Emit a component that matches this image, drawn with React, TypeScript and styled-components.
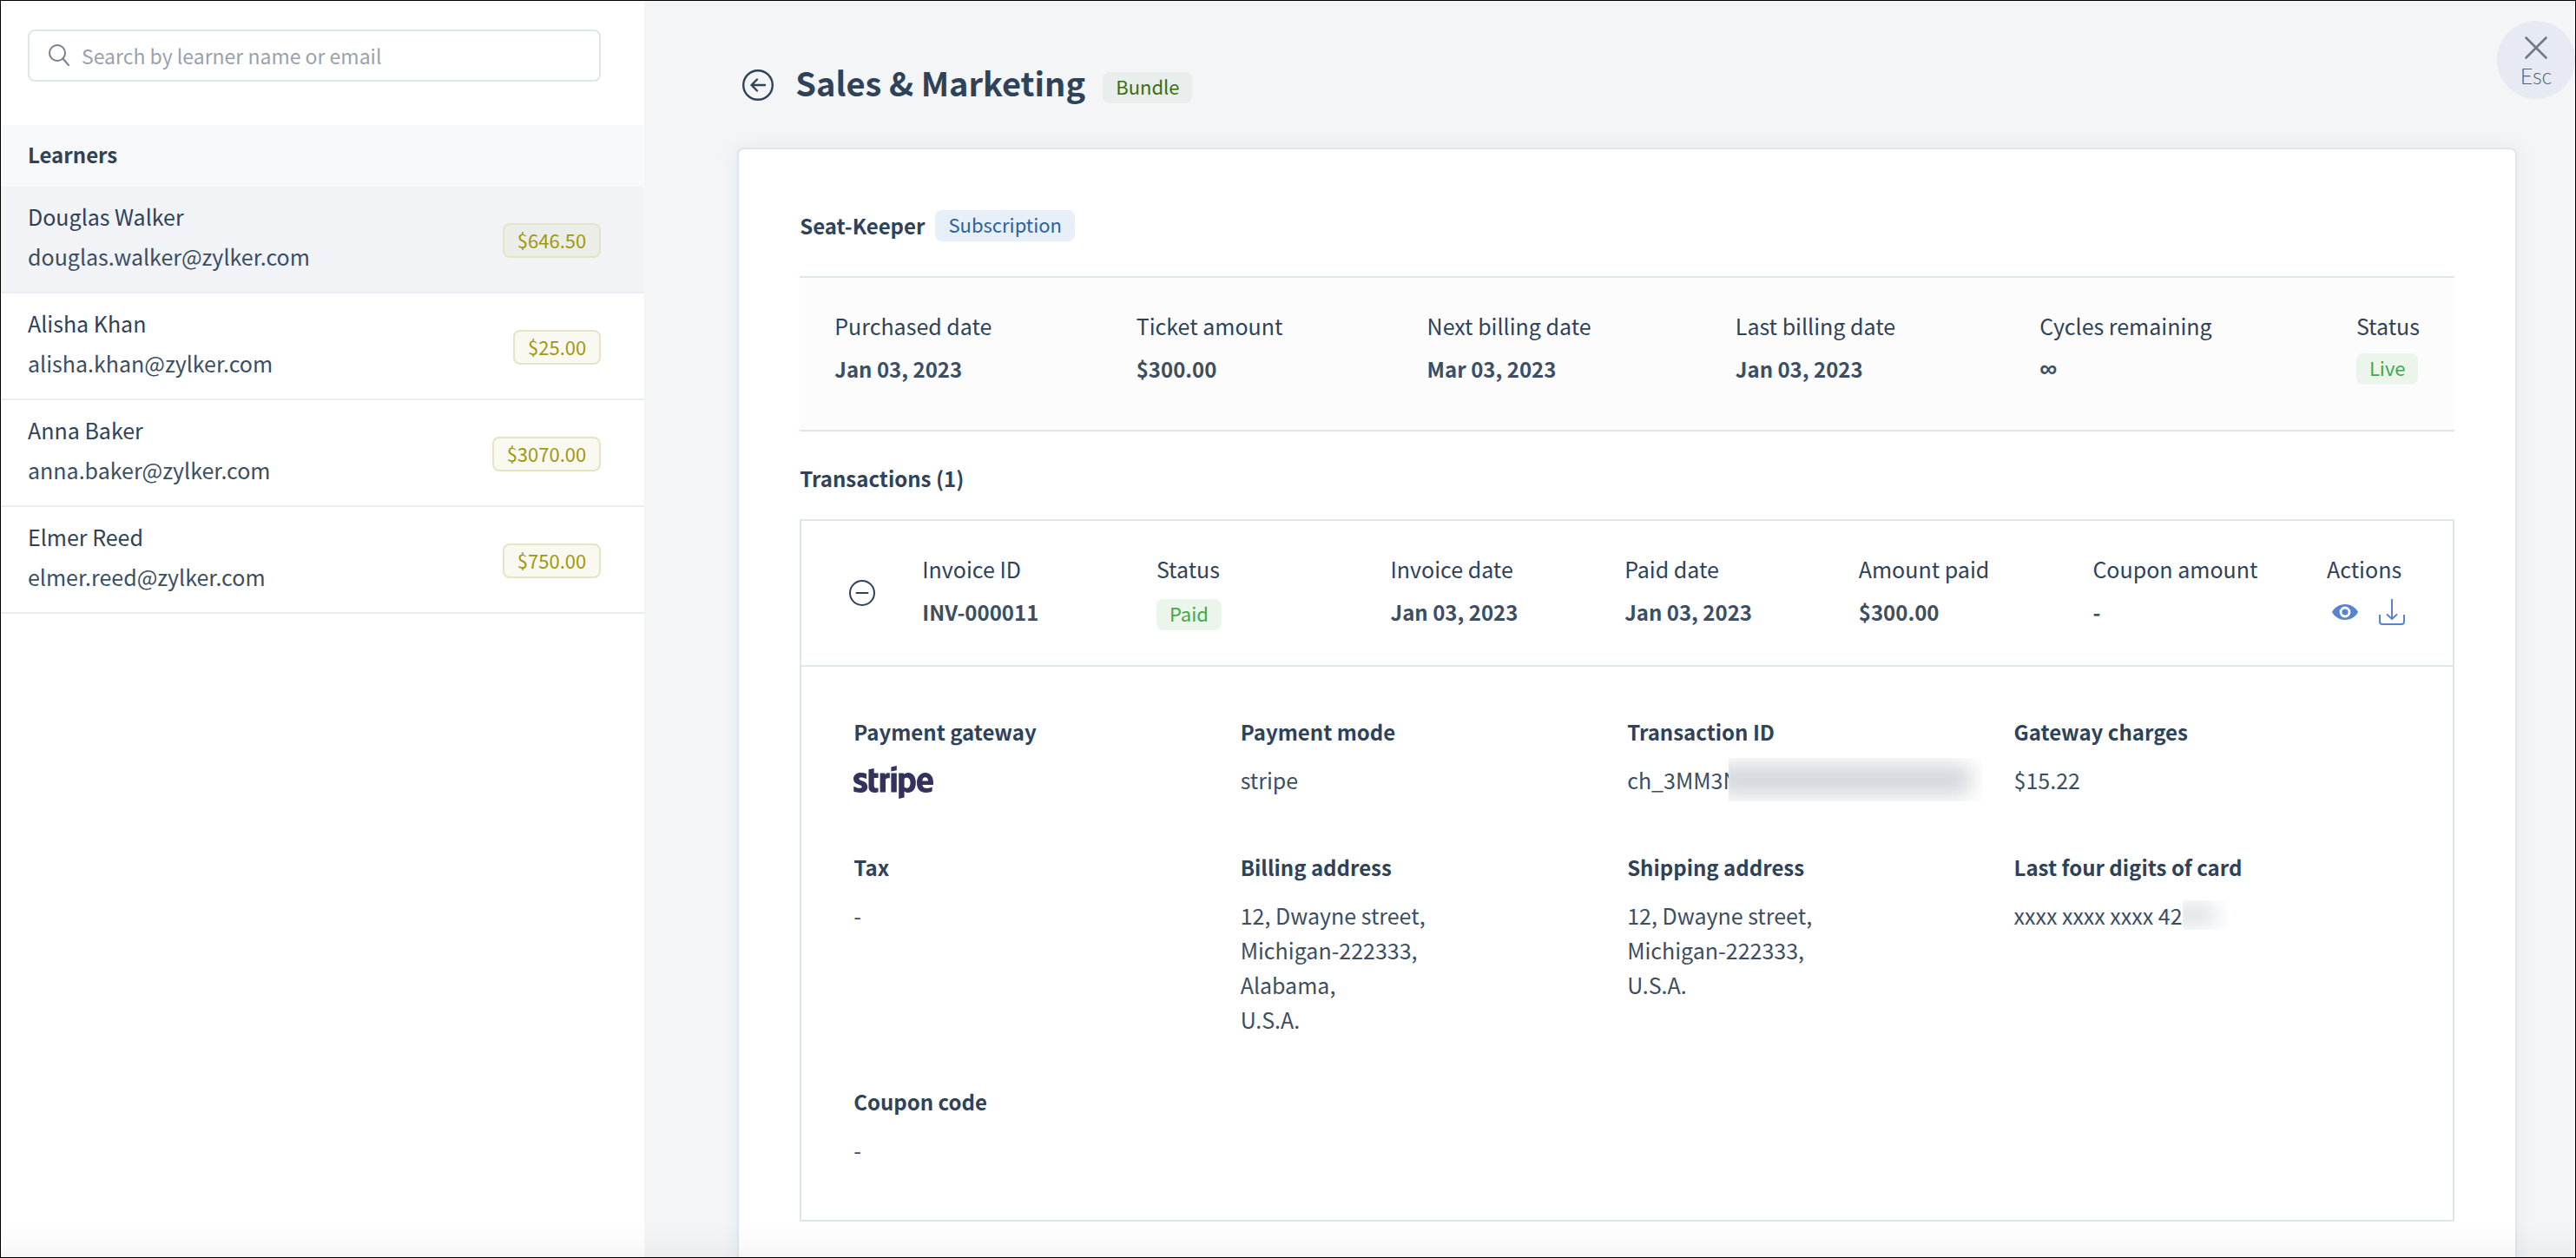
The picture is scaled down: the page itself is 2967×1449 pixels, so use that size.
import React from "react";
import styled, { createGlobalStyle } from "styled-components";
import { FaStripe } from "react-icons/fa";

const ink = "#2e4259";
const softInk = "#3b4e64";
const line = "#dde6ea";

const GlobalStyle = createGlobalStyle`
  *, *::before, *::after { box-sizing: border-box; }
  body {
    margin: 0;
    color: ${ink};
    font-family: "Noto Sans CJK SC", "Noto Sans", sans-serif;
    font-size: 25px;
    line-height: 40px;
  }
  button, input { font: inherit; color: inherit; }
  button { padding: 0; border: 0; background: none; cursor: pointer; }
  h1, h2, h3, p, dl, dd, ul { margin: 0; padding: 0; }
  svg { display: block; flex: none; }
`;

const Page = styled.div`
  position: relative;
  display: grid;
  grid-template-columns: 25% 1fr;
  height: 100vh;
  overflow: hidden;
  border: 1px solid #000;
  background: #f3f5f7;
`;

const BottomFade = styled.div`
  position: absolute;
  inset: auto 0 0 0;
  height: 40px;
  background: linear-gradient(rgba(0, 0, 0, 0), rgba(0, 0, 0, 0.03));
  pointer-events: none;
`;

/* Sidebar */

const Sidebar = styled.aside`
  background: #fff;
`;

const SearchArea = styled.div`
  padding: 33px 50px 50px 31px;
`;

const SearchBox = styled.label`
  display: flex;
  align-items: center;
  gap: 14px;
  height: 60px;
  padding: 0 22px;
  border: 2px solid ${line};
  border-radius: 8px;
  color: #76808f;
`;

const SearchInput = styled.input`
  flex: 1;
  min-width: 0;
  height: 40px;
  padding: 0;
  border: 0;
  outline: 0;
  background: none;
  font-size: 23px;
  &::placeholder {
    color: #98a2af;
    opacity: 1;
  }
`;

const ListHeading = styled.h2`
  padding: 14px 31px 17px;
  background: #f8f9fb;
  font-size: 24px;
  font-weight: 700;
`;

const LearnerList = styled.ul`
  list-style: none;
`;

const LearnerButton = styled.button<{ $active?: boolean }>`
  display: flex;
  align-items: center;
  justify-content: space-between;
  width: 100%;
  padding: 11px 50px 8px 31px;
  border-bottom: 2px solid #e8edf1;
  background: ${(p) => (p.$active ? "#f1f3f7" : "#fff")};
  text-align: left;
`;

const LearnerText = styled.span`
  display: grid;
  padding-bottom: 10px;
  line-height: 46px;
`;

const Email = styled.span`
  color: ${softInk};
`;

const Amount = styled.span`
  padding: 0 15px 2px;
  border: 2px solid #e6e4c4;
  border-radius: 8px;
  background: rgba(160, 150, 10, 0.06);
  color: #a0980f;
  font-size: 22px;
  line-height: 34px;
`;

/* Main panel */

const Main = styled.main`
  position: relative;
  padding: 69px 67px 0 107px;
`;

const tones = {
  green: { bg: "#e9edec", fg: "#3a6e0b" },
  blue: { bg: "#e7eff9", fg: "#2a629e" },
  live: { bg: "#ecf5ec", fg: "#44a748" },
};

const Tag = styled.span<{ $tone: keyof typeof tones }>`
  display: inline-block;
  height: 36px;
  padding: 0 15px;
  border-radius: 8px;
  background: ${(p) => tones[p.$tone].bg};
  color: ${(p) => tones[p.$tone].fg};
  font-size: 22px;
  line-height: 33px;
  font-weight: 400;
`;

const TitleBar = styled.header`
  display: flex;
  align-items: center;
  height: 56px;
  margin-bottom: 44px;
  padding-left: 6px;
  ${Tag} {
    margin-top: 6px;
  }
`;

const Title = styled.h1`
  margin: 0 20px 6px 25px;
  font-size: 38px;
  line-height: 56px;
  font-weight: 700;
`;

const CloseButton = styled.button`
  position: absolute;
  top: 23px;
  right: 0;
  display: grid;
  justify-items: center;
  align-content: start;
  gap: 4px;
  width: 90px;
  height: 90px;
  padding-top: 16px;
  border-radius: 50%;
  background: #e7eaf2;
  color: #566278;
  font-family: Lato, sans-serif;
  font-size: 25px;
  font-weight: 300;
  line-height: 26px;
`;

const Card = styled.section`
  min-height: 1400px;
  padding: 68px 70px;
  border: 2px solid ${line};
  border-radius: 8px;
  background: #fff;
  box-shadow: 0 0 18px rgba(190, 208, 220, 0.3);
`;

const PlanHeading = styled.div`
  display: flex;
  align-items: center;
  gap: 12px;
  margin-bottom: 38px;
`;

const SectionTitle = styled.h2`
  font-size: 24px;
  line-height: 40px;
  font-weight: 700;
`;

const Summary = styled.dl`
  display: flex;
  justify-content: space-between;
  height: 179px;
  padding: 30px 40px;
  border: solid ${line};
  border-width: 2px 0;
  background: #fcfcfd;
`;

const Field = styled.div`
  line-height: 50px;
`;

const FieldValue = styled.dd`
  display: flex;
  align-items: center;
  height: 50px;
  color: ${softInk};
  font-size: 24px;
  font-weight: 700;
`;

const Infinity = styled.span`
  font-family: "Liberation Sans", sans-serif;
  font-size: 28px;
`;

const Transactions = styled.div`
  margin-top: 34px;
`;

const TransactionBox = styled.article`
  margin-top: 27px;
  border: 2px solid ${line};
`;

const TransactionRow = styled.div`
  display: grid;
  grid-template-columns: 139px 1fr;
  align-items: center;
  height: 168px;
  border-bottom: 2px solid ${line};
`;

const ToggleButton = styled.button`
  display: grid;
  margin-left: 55px;
  justify-self: start;
`;

const TransactionFields = styled.dl`
  display: grid;
  grid-template-columns: repeat(6, 1fr) 145px;
  padding-bottom: 6px;
  ${Tag} {
    margin-top: 6px;
  }
`;

const IconButton = styled.button`
  display: grid;
  place-items: center;
  width: 30px;
  height: 36px;
  margin: 0 18px 0 6px;
  color: #5a82d2;
`;

const Details = styled.dl`
  display: grid;
  grid-template-columns: repeat(4, 1fr);
  row-gap: 55px;
  padding: 55px 60px 61px;
`;

const DetailLabel = styled.dt`
  margin-bottom: 15px;
  font-size: 24px;
  font-weight: 700;
`;

const DetailValue = styled.dd`
  display: flex;
  align-items: center;
  color: ${softInk};
  white-space: pre-line;
`;

const LogoSlot = styled.span`
  display: grid;
  height: 46px;
  place-items: center;
  color: #32325d;
`;

const Redaction = styled.span<{ $width: number; $height: number; $overlap?: number }>`
  position: relative;
  overflow: hidden;
  width: ${(p) => p.$width}px;
  height: ${(p) => p.$height}px;
  margin: -6px 0 -6px ${(p) => -(p.$overlap ?? 0)}px;
  background: #fff;
  &::before {
    content: "";
    position: absolute;
    inset: 8px 14px 8px -14px;
    background: #d0d5da;
    filter: blur(12px);
  }
`;

const SearchIcon = () => (
  <svg width="24" height="26" viewBox="0 0 24 26" fill="none" stroke="currentColor" strokeWidth="2" strokeLinecap="round">
    <circle cx="10" cy="10" r="9" />
    <path d="M16.5 16.5 23 24" />
  </svg>
);

const BackIcon = () => (
  <svg width="36" height="36" viewBox="0 0 36 36" fill="none" stroke="currentColor" strokeWidth="2.4" strokeLinecap="round" strokeLinejoin="round">
    <circle cx="18" cy="18" r="16.8" />
    <path d="M26 18H10.5M17 11.5 10.5 18l6.500 6.500" />
  </svg>
);

const CloseIcon = () => (
  <svg width="30" height="30" viewBox="0 0 30 30" fill="none" stroke="#6d7a88" strokeWidth="2.6" strokeLinecap="round">
    <path d="M3.500 3.500 26.500 26.500M26.500 3.500 3.500 26.500" />
  </svg>
);

const MinusIcon = () => (
  <svg width="30" height="30" viewBox="0 0 30 30" fill="none" stroke="currentColor" strokeWidth="2">
    <circle cx="15" cy="15" r="14" />
    <path d="M8.500 15h13" strokeLinecap="round" />
  </svg>
);

const EyeIcon = () => (
  <svg width="30" height="18" viewBox="0 0 30 18">
    <path
      fill="currentColor"
      fillRule="evenodd"
      d="M15 0C8 0 2.500 4.200 0 9c2.500 4.800 8 9 15 9s12.500-4.200 15-9C27.500 4.200 22 0 15 0Zm0 2.600a6.400 6.400 0 1 1 0 12.800 6.400 6.400 0 0 1 0-12.800Z"
    />
    <circle cx="15" cy="9" r="3.600" fill="currentColor" />
  </svg>
);

const DownloadIcon = () => (
  <svg width="30" height="30" viewBox="0 0 30 30" fill="none" stroke="currentColor" strokeWidth="2">
    <path d="M1 18v8a3 3 0 0 0 3 3h22a3 3 0 0 0 3-3v-8" />
    <path d="M15 0v23M9 17.500 15 23l6-5.500" />
  </svg>
);

const learners = [
  { name: "Douglas Walker", email: "douglas.walker@zylker.com", amount: "$646.50" },
  { name: "Alisha Khan", email: "alisha.khan@zylker.com", amount: "$25.00" },
  { name: "Anna Baker", email: "anna.baker@zylker.com", amount: "$3070.00" },
  { name: "Elmer Reed", email: "elmer.reed@zylker.com", amount: "$750.00" },
];

const summary: [string, React.ReactNode][] = [
  ["Purchased date", "Jan 03, 2023"],
  ["Ticket amount", "$300.00"],
  ["Next billing date", "Mar 03, 2023"],
  ["Last billing date", "Jan 03, 2023"],
  ["Cycles remaining", <Infinity key="i">∞</Infinity>],
  ["Status", <Tag key="t" $tone="live">Live</Tag>],
];

const transaction: [string, React.ReactNode][] = [
  ["Invoice ID", "INV-000011"],
  ["Status", <Tag key="t" $tone="live">Paid</Tag>],
  ["Invoice date", "Jan 03, 2023"],
  ["Paid date", "Jan 03, 2023"],
  ["Amount paid", "$300.00"],
  ["Coupon amount", "-"],
  [
    "Actions",
    <React.Fragment key="a">
      <IconButton type="button" aria-label="View invoice"><EyeIcon /></IconButton>
      <IconButton type="button" aria-label="Download invoice"><DownloadIcon /></IconButton>
    </React.Fragment>,
  ],
];

const details: [string, React.ReactNode][] = [
  [
    "Payment gateway",
    <LogoSlot key="l">
      <FaStripe viewBox="0 96 640 320" width={92} height={46} style={{ width: 92, height: 46 }} aria-label="stripe" />
    </LogoSlot>,
  ],
  ["Payment mode", "stripe"],
  ["Transaction ID", <React.Fragment key="r">ch_3MM3N<Redaction $width={293} $height={50} $overlap={11} /></React.Fragment>],
  ["Gateway charges", "$15.22"],
  ["Tax", "-"],
  ["Billing address", "12, Dwayne street,\nMichigan-222333,\nAlabama,\nU.S.A."],
  ["Shipping address", "12, Dwayne street,\nMichigan-222333,\nU.S.A."],
  ["Last four digits of card", <React.Fragment key="c">xxxx xxxx xxxx 42<Redaction $width={52} $height={34} /></React.Fragment>],
  ["Coupon code", "-"],
];

export default function App() {
  return (
    <>
      <GlobalStyle />
      <Page>
        <Sidebar>
          <SearchArea>
            <SearchBox>
              <SearchIcon />
              <SearchInput type="text" aria-label="Search learners" placeholder="Search by learner name or email" />
            </SearchBox>
          </SearchArea>
          <ListHeading>Learners</ListHeading>
          <LearnerList>
            {learners.map((l, i) => (
              <li key={l.email}>
                <LearnerButton type="button" $active={i === 0}>
                  <LearnerText>
                    <span>{l.name}</span>
                    <Email>{l.email}</Email>
                  </LearnerText>
                  <Amount>{l.amount}</Amount>
                </LearnerButton>
              </li>
            ))}
          </LearnerList>
        </Sidebar>
        <Main>
          <TitleBar>
            <button type="button" aria-label="Back"><BackIcon /></button>
            <Title>Sales &amp; Marketing</Title>
            <Tag $tone="green">Bundle</Tag>
          </TitleBar>
          <CloseButton type="button">
            <CloseIcon />
            Esc
          </CloseButton>
          <Card>
            <PlanHeading>
              <SectionTitle>Seat-Keeper</SectionTitle>
              <Tag $tone="blue">Subscription</Tag>
            </PlanHeading>
            <Summary>
              {summary.map(([label, value]) => (
                <Field key={label}>
                  <dt>{label}</dt>
                  <FieldValue>{value}</FieldValue>
                </Field>
              ))}
            </Summary>
            <Transactions>
              <SectionTitle>Transactions (1)</SectionTitle>
              <TransactionBox>
                <TransactionRow>
                  <ToggleButton type="button" aria-label="Collapse transaction"><MinusIcon /></ToggleButton>
                  <TransactionFields>
                    {transaction.map(([label, value]) => (
                      <Field key={label}>
                        <dt>{label}</dt>
                        <FieldValue>{value}</FieldValue>
                      </Field>
                    ))}
                  </TransactionFields>
                </TransactionRow>
                <Details>
                  {details.map(([label, value]) => (
                    <div key={label}>
                      <DetailLabel>{label}</DetailLabel>
                      <DetailValue>{value}</DetailValue>
                    </div>
                  ))}
                </Details>
              </TransactionBox>
            </Transactions>
          </Card>
        </Main>
        <BottomFade />
      </Page>
    </>
  );
}
